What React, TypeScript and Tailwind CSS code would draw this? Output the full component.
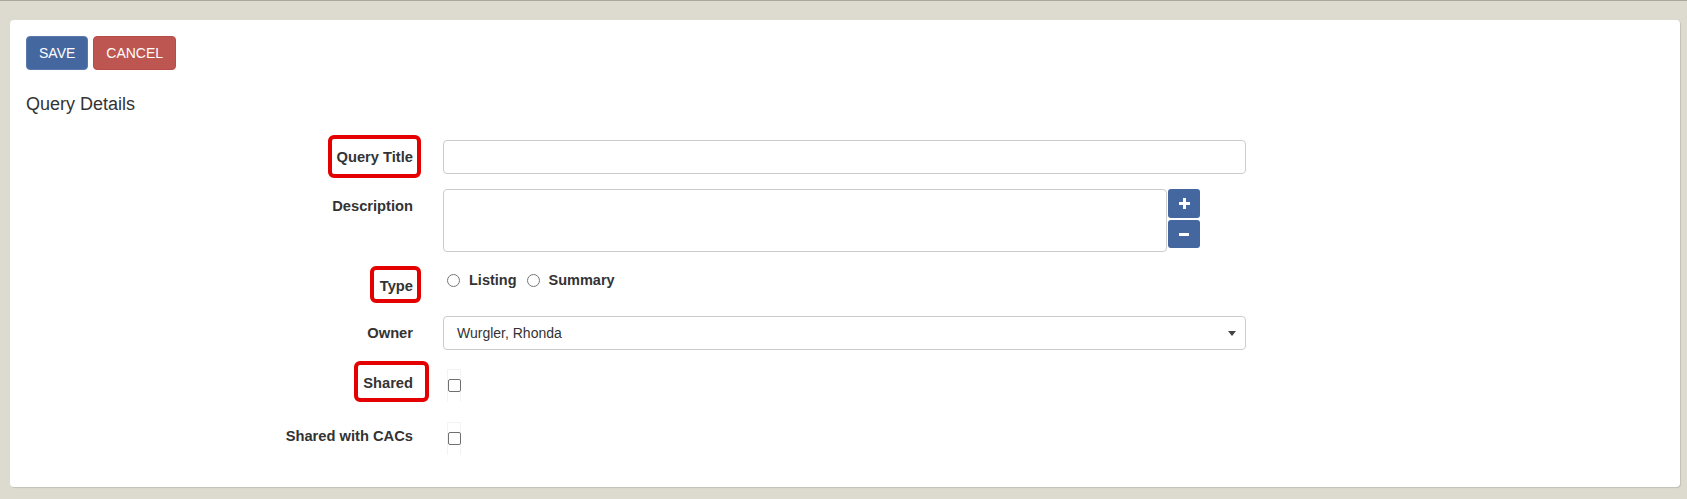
import React from "react";

const font = { fontFamily: '"Liberation Sans", Arial, sans-serif' };

// red annotation outline drawn over a label
function Marked({ children, box }: { children: React.ReactNode; box: string }) {
  return (
    <span className="relative inline-block">
      {children}
      <span className={`pointer-events-none absolute rounded-[6px] border-[4px] border-[#e50000] ${box}`} />
    </span>
  );
}

function Label({ children, pad }: { children: React.ReactNode; pad: string }) {
  return (
    <div className={`w-[387px] shrink-0 text-right text-[14.7px] font-bold leading-5 text-[#333] ${pad}`}>
      {children}
    </div>
  );
}

function Check() {
  return (
    <div className="ml-[4px] h-[33px] w-[14px] border-x border-t border-[#f3f3f3] pt-[9px]">
      <span className="block h-[13px] w-[13px] rounded-[2px] border border-[#6f6f6f] bg-white" />
    </div>
  );
}

function Radio({ label }: { label: string }) {
  return (
    <label className="flex items-center gap-[9px]">
      <span className="block h-[13px] w-[13px] rounded-full border border-[#767676] bg-white" />
      <span className="text-[14.5px] font-bold leading-5 text-[#333]">{label}</span>
    </label>
  );
}

export default function App() {
  return (
    <div className="min-h-[499px] w-[1687px] border-t border-[#aaa89e] bg-[#dddbcf]" style={font}>
      <div className="ml-[10px] mr-[7px] mt-[19px] rounded-[4px] bg-white pl-[16px] pt-[16px] pb-[32px] shadow-[1px_1px_1px_rgba(0,0,0,0.12)]">
        {/* toolbar */}
        <div className="flex gap-[5px]">
          <button className="h-[34px] rounded-[4px] border border-[#5b79aa] bg-[#4467a0] px-[12px] text-[14px] text-white">
            SAVE
          </button>
          <button className="h-[34px] rounded-[4px] border border-[#b84a47] bg-[#bd5551] px-[12px] text-[14px] text-white">
            CANCEL
          </button>
        </div>

        <div className="mt-[24px] text-[18px] leading-5 text-[#333]">Query Details</div>

        <div className="mt-[26px] flex flex-col">
          {/* Query Title */}
          <div className="flex items-center">
            <Label pad="">
              <Marked box="-left-[9px] -right-[8px] -top-[12px] -bottom-[11px]">Query Title</Marked>
            </Label>
            <input className="ml-[30px] h-[34px] w-[803px] rounded-[4px] border border-[#ccc] px-3 text-[14px] outline-none" />
          </div>

          {/* Description */}
          <div className="mt-[15px] flex items-start">
            <Label pad="pt-[7px]">Description</Label>
            <textarea className="ml-[30px] h-[63px] w-[724px] resize-none rounded-[4px] border border-[#ccc] px-3 text-[14px] outline-none" />
            <div className="ml-px flex flex-col gap-[2px]">
              <button className="flex h-[29px] w-[32px] items-center justify-center rounded-[3px] bg-[#4467a0]">
                <svg width="11" height="11" viewBox="0 0 11 11">
                  <rect x="4" y="0" width="3" height="11" fill="#fff" />
                  <rect x="0" y="4" width="11" height="3" fill="#fff" />
                </svg>
              </button>
              <button className="flex h-[28px] w-[32px] items-center justify-center rounded-[3px] bg-[#4467a0]">
                <svg width="10" height="3" viewBox="0 0 10 3">
                  <rect x="0" y="0" width="10" height="3" fill="#fff" />
                </svg>
              </button>
            </div>
          </div>

          {/* Type */}
          <div className="mt-[15px] flex h-[34px] items-start">
            <Label pad="pt-[9px]">
              <Marked box="-left-[10px] -right-[8px] -top-[10px] -bottom-[7px]">Type</Marked>
            </Label>
            <div className="ml-[34px] flex items-center gap-[10px] pt-[3px]">
              <Radio label="Listing" />
              <Radio label="Summary" />
            </div>
          </div>

          {/* Owner */}
          <div className="mt-[15px] flex items-center">
            <Label pad="">Owner</Label>
            <div className="ml-[30px] flex h-[34px] w-[803px] items-center justify-between rounded-[4px] border border-[#ccc] pl-[13px] pr-[9px]">
              <span className="text-[14px] text-[#333]">Wurgler, Rhonda</span>
              <svg width="8" height="5" viewBox="0 0 8 5">
                <path d="M0 0H8L4 5Z" fill="#444" />
              </svg>
            </div>
          </div>

          {/* Shared */}
          <div className="mt-[15px] flex items-start">
            <Label pad="pt-[8px]">
              <Marked box="-left-[9px] -right-[16px] -top-[12px] -bottom-[9px]">Shared</Marked>
            </Label>
            <div className="ml-[30px] pt-[4px]">
              <Check />
            </div>
          </div>

          {/* Shared with CACs */}
          <div className="mt-[15px] flex items-start">
            <Label pad="pt-[9px]">Shared with CACs</Label>
            <div className="ml-[30px] pt-[5px]">
              <Check />
            </div>
          </div>
        </div>
      </div>
    </div>
  );
}
